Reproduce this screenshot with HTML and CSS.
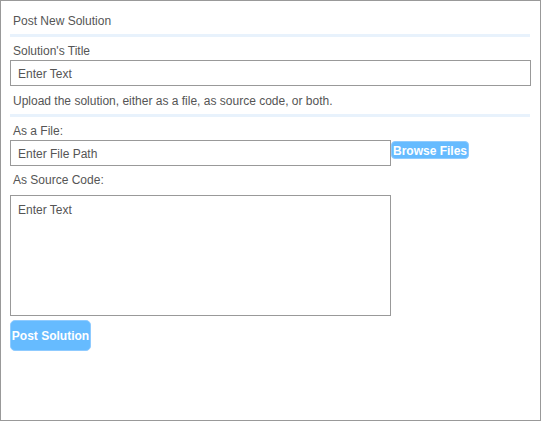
FILE: index.html
```html
<!DOCTYPE html>
<html>
<head>
<meta charset="utf-8">
<link rel="stylesheet" href="styles.css">
</head>
<body>
<div class="page">
  <div class="heading">Post New Solution</div>
  <hr class="sep">
  <label class="label label-first">Solution's Title</label>
  <div class="field field-wide"><span class="ph">Enter Text</span></div>
  <p class="note">Upload the solution, either as a file, as source code, or both.</p>
  <hr class="sep">
  <label class="label">As a File:</label>
  <div class="file-row">
    <div class="field field-file"><span class="ph">Enter File Path</span></div>
    <button class="btn btn-browse">Browse Files</button>
  </div>
  <label class="label label-code">As Source Code:</label>
  <div class="field field-area"><span class="ph">Enter Text</span></div>
  <button class="btn btn-post">Post Solution</button>
</div>
</body>
</html>
```

FILE: styles.css
```css
html, body {
  margin: 0;
  padding: 0;
  background: #fff;
}
* { box-sizing: border-box; }
.page {
  width: 541px;
  height: 421px;
  border: 1px solid #999;
  padding: 0 10px 0 9px;
  font-family: "Liberation Sans", Arial, sans-serif;
  font-size: 12px;
  line-height: 14px;
  color: #555;
}
.heading {
  padding: 13px 3px 0;
  height: 33px;
}
.sep {
  margin: 0;
  border: 0;
  height: 3px;
  background: #e8f2fc;
}
.label {
  display: block;
  padding: 7px 3px 0;
  height: 23px;
}
.label-code {
  height: 29px;
}
.field {
  border: 1px solid #999;
  background: #fff;
  height: 26px;
  padding: 6px 7px 0;
}
.field-wide { width: 521px; }
.field-file { width: 381px; }
.field-area { width: 381px; height: 121px; padding-top: 7px; }
.note {
  margin: 0;
  padding: 8px 3px 0;
  height: 28px;
}
.file-row {
  display: flex;
  align-items: flex-start;
}
.btn {
  font-family: "Liberation Sans", Arial, sans-serif;
  font-weight: bold;
  font-size: 12px;
  color: #fff;
  background: #66bbff;
  border: 1px solid #8fcbff;
  cursor: pointer;
}
.btn-browse {
  margin-top: 1px;
  height: 18px;
  padding: 1px 1px 0;
  border-radius: 4px;
  line-height: 14px;
}
.btn-post {
  display: block;
  margin-top: 4px;
  height: 31px;
  width: 81px;
  padding: 1px 0 0;
  border-radius: 5px;
}
```
